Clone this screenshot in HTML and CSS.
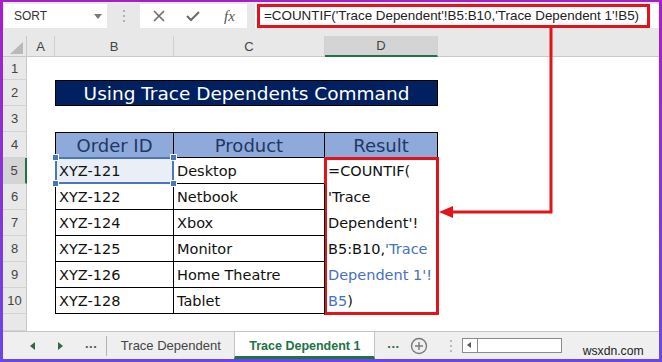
FILE: index.html
```html
<!DOCTYPE html>
<html>
<head>
<meta name="viewport" content="width=device-width, initial-scale=1">
<link rel="stylesheet" href="styles.css">
</head>
<body>
<div class="frame">
  <div class="app">
    <!-- Name box and formula bar -->
    <div class="formula-bar">
      <div class="name-box"><span>SORT</span><span class="drop"></span></div>
      <div class="grip">
        <svg width="4" height="14" viewBox="0 0 4 14"><circle cx="2" cy="2" r="1" fill="#a0a0a0"/><circle cx="2" cy="7" r="1" fill="#a0a0a0"/><circle cx="2" cy="12" r="1" fill="#a0a0a0"/></svg>
      </div>
      <div class="fx-box">
        <svg class="ico-x" width="12" height="12" viewBox="0 0 12 12"><path d="M1 1 L11 11 M11 1 L1 11" stroke="#6a6a6a" stroke-width="1.6" fill="none"/></svg>
        <svg class="ico-ok" width="14" height="12" viewBox="0 0 14 12"><path d="M1 6 L5 10 L13 2" stroke="#6a6a6a" stroke-width="2" fill="none"/></svg>
        <span class="fx">fx</span>
      </div>
      <div class="formula">
        <div class="formula-box">=COUNTIF('Trace Dependent'!B5:B10,'Trace Dependent 1'!B5)</div>
      </div>
    </div>

    <!-- Worksheet grid -->
    <div class="sheet">
      <div class="corner"><svg width="13" height="12" viewBox="0 0 13 12"><polygon points="13,0 13,12 0,12" fill="#b9b9b9"/></svg></div>
      <div class="ch">A</div>
      <div class="ch">B</div>
      <div class="ch">C</div>
      <div class="ch active">D</div>
      <div class="ch last"></div>

      <div class="rh">1</div><div></div><div></div><div></div><div></div><div></div>

      <div class="rh">2</div><div></div>
      <div class="title">Using Trace Dependents Command</div>
      <div></div>

      <div class="rh">3</div><div></div><div></div><div></div><div></div><div></div>

      <div class="rh">4</div><div></div>
      <div class="th first">Order ID</div>
      <div class="th">Product</div>
      <div class="th">Result</div>
      <div></div>

      <div class="rh active">5</div><div></div>
      <div class="td first selected">XYZ-121
        <span class="handle tl"></span><span class="handle tr"></span><span class="handle bl"></span><span class="handle br"></span>
      </div>
      <div class="td">Desktop</div>
      <div class="result">=COUNTIF(<br>'Trace<br>Dependent'!<br>B5:B10,<span class="ref">'Trace</span><br><span class="ref">Dependent 1'!</span><br><span class="ref">B5</span>)</div>
      <div></div>

      <div class="rh">6</div><div></div><div class="td first">XYZ-122</div><div class="td">Netbook</div><div></div>
      <div class="rh">7</div><div></div><div class="td first">XYZ-124</div><div class="td">Xbox</div><div></div>
      <div class="rh">8</div><div></div><div class="td first">XYZ-125</div><div class="td">Monitor</div><div></div>
      <div class="rh">9</div><div></div><div class="td first">XYZ-126</div><div class="td">Home Theatre</div><div></div>
      <div class="rh">10</div><div></div><div class="td first">XYZ-128</div><div class="td">Tablet</div><div></div>

      <div class="rh"></div><div></div><div></div><div></div><div></div><div></div>
    </div>

    <!-- Sheet tabs -->
    <div class="tabs">
      <span class="nav nav-left"></span>
      <span class="nav nav-right"></span>
      <span class="dots">...</span>
      <span class="sep"></span>
      <span class="tab">Trace Dependent</span>
      <span class="tab active">Trace Dependent 1</span>
      <span class="dots green">...</span>
      <span class="add">
        <svg width="18" height="18" viewBox="0 0 18 18"><circle cx="9" cy="9" r="7.5" stroke="#7a7a7a" stroke-width="1.4" fill="none"/><path d="M9 5 V13 M5 9 H13" stroke="#7a7a7a" stroke-width="1.4"/></svg>
      </span>
      <span class="grip small">
        <svg width="4" height="14" viewBox="0 0 4 14"><circle cx="2" cy="2" r="1" fill="#a8a8a8"/><circle cx="2" cy="7" r="1" fill="#a8a8a8"/><circle cx="2" cy="12" r="1" fill="#a8a8a8"/></svg>
      </span>
      <span class="scroll"><span class="scroll-btn"></span></span>
      <span class="mark">wsxdn.com</span>
    </div>
  </div>

  <!-- Annotation arrow from the formula bar to the result cell -->
  <svg class="arrow" width="662" height="362" viewBox="0 0 662 362">
    <path d="M551 28 V212 H450" stroke="#e3121b" stroke-width="3" fill="none"/>
    <polygon points="439,212 453,206 453,218" fill="#e3121b"/>
  </svg>
</div>
</body>
</html>
```

FILE: styles.css
```css
body {
  margin: 0;
  font-family: "Liberation Sans", Arial, sans-serif;
}

/* Purple frame round the whole shot */
.frame {
  position: relative;
  width: 662px;
  height: 362px;
  box-sizing: border-box;
  padding: 2px 3px 3px 3px;
  background: linear-gradient(#a61fc9, #6a46e6);
}

.app {
  height: 100%;
  display: flex;
  flex-direction: column;
  background: #e8e8e8;
}

/* Formula bar */
.formula-bar {
  height: 34px;
  flex-shrink: 0;
  display: flex;
  align-items: flex-start;
  padding-top: 2px;
  box-sizing: border-box;
}

.name-box {
  margin-left: 1px;
  width: 103px;
  height: 24px;
  box-sizing: border-box;
  padding: 0 5px 0 10px;
  background: #fff;
  display: flex;
  align-items: center;
  justify-content: space-between;
  font-size: 12px;
  color: #333;
}

.drop {
  width: 0;
  height: 0;
  border-left: 4px solid transparent;
  border-right: 4px solid transparent;
  border-top: 5px solid #7a7a7a;
}

.grip {
  width: 33px;
  height: 24px;
  display: flex;
  align-items: center;
  justify-content: center;
}

.fx-box {
  width: 107px;
  height: 24px;
  background: #fff;
  display: flex;
  align-items: center;
}

.ico-x {
  margin-left: 13px;
}

.ico-ok {
  margin-left: 21px;
}

.fx {
  margin-left: 24px;
  font-family: "Liberation Serif", serif;
  font-style: italic;
  font-size: 15px;
  color: #555;
}

.formula {
  margin-left: 8px;
  flex: 1;
  height: 24px;
  background: #fff;
}

.formula-box {
  margin-left: 2px;
  width: 393px;
  height: 24px;
  box-sizing: border-box;
  border: 3px solid #e3121b;
  padding-left: 4px;
  font-size: 13.4px;
  line-height: 18px;
  color: #222;
  white-space: nowrap;
}

/* Worksheet */
.sheet {
  flex: 1;
  display: grid;
  grid-template-columns: 24px 28px 119px 151px 113px 1fr;
  grid-template-rows: 21px 23px repeat(9, 26px) 1fr;
  background: #fff;
  font-family: "DejaVu Sans", sans-serif;
}

.corner {
  background: #e8e8e8;
  border-right: 1px solid #c8c8c8;
  border-bottom: 1px solid #c8c8c8;
  display: flex;
  align-items: flex-end;
  justify-content: flex-end;
  padding: 0 3px 2px 0;
}

.ch {
  background: #e8e8e8;
  border-right: 1px solid #d0d0d0;
  border-bottom: 1px solid #c8c8c8;
  font-family: "Liberation Sans", Arial, sans-serif;
  font-size: 13px;
  color: #444;
  display: flex;
  align-items: center;
  justify-content: center;
}

.ch.active {
  background: #d4d4d4;
  border-bottom: 2px solid #217346;
}

.ch.last {
  border-right: none;
}

.rh {
  background: #e8e8e8;
  border-right: 1px solid #c8c8c8;
  border-bottom: 1px solid #d4d4d4;
  font-family: "Liberation Sans", Arial, sans-serif;
  font-size: 13px;
  color: #444;
  display: flex;
  align-items: center;
  justify-content: center;
}

.rh.active {
  background: #d4d4d4;
  border-right: 2px solid #217346;
}

.title {
  grid-column: span 3;
  background: #002060;
  border: 1px solid #000;
  color: #fff;
  font-size: 18.5px;
  display: flex;
  align-items: center;
  justify-content: center;
}

.th {
  background: #8eaadb;
  border-top: 1px solid #000;
  border-right: 1px solid #000;
  border-bottom: 1px solid #000;
  color: #1f3864;
  font-size: 18px;
  display: flex;
  align-items: center;
  justify-content: center;
}

.td {
  border-right: 1px solid #000;
  border-bottom: 1px solid #000;
  padding-left: 3px;
  font-size: 14.5px;
  color: #111;
  display: flex;
  align-items: center;
  white-space: nowrap;
}

.first {
  border-left: 1px solid #000;
}

/* Active cell B5 */
.selected {
  position: relative;
  background: #e9eef7;
}

.selected::after {
  content: "";
  position: absolute;
  top: -1px;
  left: -1px;
  right: -1px;
  bottom: -1px;
  border: 2px solid #4a76c0;
}

.handle {
  position: absolute;
  width: 5px;
  height: 5px;
  background: #4a76c0;
  border: 1px solid #fff;
  z-index: 1;
}

.tl { top: -4px; left: -4px; }
.tr { top: -4px; right: -4px; }
.bl { bottom: -4px; left: -4px; }
.br { bottom: -4px; right: -4px; }

/* Wrapped formula in D5:D10 with the red box */
.result {
  grid-row: span 6;
  border-right: 1px solid #000;
  border-bottom: 1px solid #000;
  padding-left: 3px;
  font-size: 14.5px;
  line-height: 26px;
  color: #111;
  white-space: nowrap;
  outline: 3px solid #e3121b;
  outline-offset: -2px;
}

.ref {
  color: #4472c4;
}

/* Sheet tabs */
.tabs {
  height: 28px;
  flex-shrink: 0;
  box-sizing: border-box;
  border-top: 1px solid #c4c4c4;
  background: #efefef;
  display: flex;
  align-items: center;
  font-size: 13px;
  color: #444;
}

.nav {
  width: 0;
  height: 0;
  border-top: 4px solid transparent;
  border-bottom: 4px solid transparent;
}

.nav-left {
  margin-left: 27px;
  border-right: 5px solid #2f6b40;
}

.nav-right {
  margin-left: 23px;
  border-left: 5px solid #2f6b40;
}

.dots {
  margin-left: 22px;
  font-weight: bold;
  letter-spacing: 0.5px;
  color: #555;
  padding-bottom: 4px;
}

.dots.green {
  margin-left: 12px;
  color: #2f6b40;
}

.sep {
  margin-left: 9px;
  width: 1px;
  height: 20px;
  background: #b4b4b4;
}

.tab {
  width: 127px;
  height: 100%;
  display: flex;
  align-items: center;
  justify-content: center;
}

.tab.active {
  width: 141px;
  box-sizing: border-box;
  background: #fff;
  border-left: 1px solid #c4c4c4;
  border-right: 1px solid #c4c4c4;
  border-bottom: 3px solid #217346;
  padding-top: 3px;
  font-size: 12.5px;
  font-weight: bold;
  color: #217346;
}

.add {
  margin-left: 10px;
  display: flex;
}

.grip.small {
  width: 14px;
  margin-left: 16px;
}

.scroll {
  margin-left: 4px;
  width: 100px;
  height: 15px;
  box-sizing: border-box;
  border: 1px solid #8a8a8a;
  background: #fff;
  display: flex;
}

.scroll-btn {
  width: 14px;
  border-right: 1px solid #8a8a8a;
  position: relative;
}

.scroll-btn::after {
  content: "";
  position: absolute;
  left: 4px;
  top: 3px;
  border-top: 3.5px solid transparent;
  border-bottom: 3.5px solid transparent;
  border-right: 4px solid #555;
}

.mark {
  margin-left: 21px;
  align-self: flex-end;
  padding-bottom: 1px;
  font-size: 12.2px;
  color: #222;
}

.arrow {
  position: absolute;
  top: 0;
  left: 0;
  pointer-events: none;
}
```
